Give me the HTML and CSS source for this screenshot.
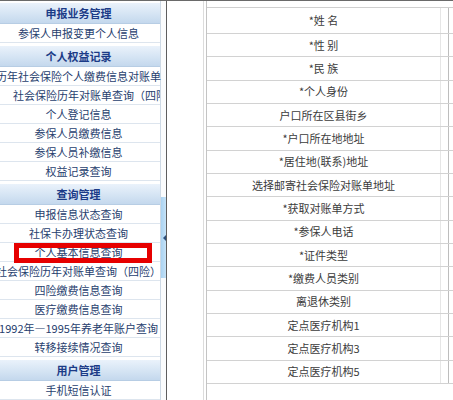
FILE: index.html
```html
<!DOCTYPE html>
<html lang="zh-CN">
<head>
<meta charset="utf-8">
<title>个人基本信息查询</title>
<link rel="stylesheet" href="styles.css">
</head>
<body>
<div class="page">
  <nav class="sidebar">
    <div class="head first">申报业务管理</div>
    <div class="item">参保人申报变更个人信息</div>
    <div class="head">个人权益记录</div>
    <div class="item">历年社会保险个人缴费信息对账单</div>
    <div class="item shifted">社会保险历年对账单查询（四险）</div>
    <div class="item">个人登记信息</div>
    <div class="item">参保人员缴费信息</div>
    <div class="item">参保人员补缴信息</div>
    <div class="item">权益记录查询</div>
    <div class="head">查询管理</div>
    <div class="item">申报信息状态查询</div>
    <div class="item">社保卡办理状态查询</div>
    <div class="item marked">个人基本信息查询<span class="mark"></span></div>
    <div class="item">社会保险历年对账单查询（四险）</div>
    <div class="item">四险缴费信息查询</div>
    <div class="item">医疗缴费信息查询</div>
    <div class="item">1992年—1995年养老年账户查询</div>
    <div class="item">转移接续情况查询</div>
    <div class="head">用户管理</div>
    <div class="item">手机短信认证</div>
  </nav>
  <div class="toggle"><div class="toggle-bar"><span class="arrow"></span></div></div>
  <main class="main">
    <div class="frame">
      <div class="col">
        <div class="table">
          <div class="row tall"><div class="label">*姓 名</div><div class="gap"></div><div class="value"></div></div>
          <div class="row"><div class="label">*性 别</div><div class="gap"></div><div class="value"></div></div>
          <div class="row"><div class="label">*民 族</div><div class="gap"></div><div class="value"></div></div>
          <div class="row"><div class="label">*个人身份</div><div class="gap"></div><div class="value"></div></div>
          <div class="row"><div class="label">户口所在区县街乡</div><div class="gap"></div><div class="value"></div></div>
          <div class="row"><div class="label">*户口所在地地址</div><div class="gap"></div><div class="value"></div></div>
          <div class="row"><div class="label">*居住地(联系)地址</div><div class="gap"></div><div class="value"></div></div>
          <div class="row"><div class="label">选择邮寄社会保险对账单地址</div><div class="gap"></div><div class="value"></div></div>
          <div class="row"><div class="label">*获取对账单方式</div><div class="gap"></div><div class="value"></div></div>
          <div class="row"><div class="label">*参保人电话</div><div class="gap"></div><div class="value"></div></div>
          <div class="row"><div class="label">*证件类型</div><div class="gap"></div><div class="value"></div></div>
          <div class="row"><div class="label">*缴费人员类别</div><div class="gap"></div><div class="value"></div></div>
          <div class="row"><div class="label">离退休类别</div><div class="gap"></div><div class="value"></div></div>
          <div class="row"><div class="label">定点医疗机构1</div><div class="gap"></div><div class="value"></div></div>
          <div class="row"><div class="label">定点医疗机构3</div><div class="gap"></div><div class="value"></div></div>
          <div class="row"><div class="label">定点医疗机构5</div><div class="gap"></div><div class="value"></div></div>
        </div>
      </div>
    </div>
  </main>
</div>
</body>
</html>
```

FILE: styles.css
```css
* {
  box-sizing: border-box;
}

html, body {
  margin: 0;
  padding: 0;
  background: #ffffff;
}

body {
  font-family: "Noto Sans CJK SC", "Noto Sans", sans-serif;
  font-size: 11px;
  width: 453px;
  height: 400px;
  overflow: hidden;
}

.page {
  display: flex;
  height: 400px;
  border-top: 1px solid #6a6a6a;
}

/* ---------- sidebar ---------- */
.sidebar {
  width: 161px;
  flex: none;
  display: flex;
  flex-direction: column;
  border-right: 1px solid #cdd9e5;
  background: #ffffff;
}

.head {
  flex: none;
  height: 21px;
  margin-top: 3px;
  display: flex;
  align-items: center;
  justify-content: center;
  padding-right: 3px;
  background: linear-gradient(#eaf2fb, #d3e3f3 60%, #c4d8ed);
  border-bottom: 1px solid #b7cde4;
  color: #1b3b87;
  font-weight: bold;
  line-height: 1;
  white-space: nowrap;
}

.head.first {
  margin-top: 2px;
}

.item {
  position: relative;
  flex: none;
  height: 19px;
  display: flex;
  align-items: center;
  justify-content: center;
  padding-right: 3px;
  border-bottom: 1px solid #dde5ee;
  color: #27406e;
  line-height: 1;
  white-space: nowrap;
}

.item.shifted {
  justify-content: flex-start;
  padding-left: 13px;
  overflow: hidden;
}

.item.marked {
  z-index: 2;
}

.mark {
  position: absolute;
  left: 14px;
  top: 0;
  width: 138px;
  height: 20px;
  border: 5px solid #e60000;
}

/* ---------- splitter toggle ---------- */
.toggle {
  width: 6px;
  flex: none;
  border-right: 1px solid #5e5e5e;
  background: #fbfcfd;
}

.toggle-bar {
  margin-top: 196px;
  height: 81px;
  background: linear-gradient(90deg, #a9d2f1, #c6e3f8);
  display: flex;
  align-items: center;
  justify-content: center;
}

.arrow {
  width: 0;
  height: 0;
  border-top: 3px solid transparent;
  border-bottom: 3px solid transparent;
  border-right: 3px solid #2c4f7c;
  margin-left: 1px;
}

/* ---------- main ---------- */
.main {
  flex: 1;
  padding-left: 36px;
  overflow: hidden;
}

.frame {
  height: 100%;
  border-left: 1px solid #dcdcdc;
  padding-left: 2px;
}

.col {
  height: 100%;
  border-left: 1px solid #c4c4c4;
  padding-top: 6px;
}

.table {
  border-top: 1px solid #cfcfcf;
}

.row {
  display: grid;
  grid-template-columns: 234px 7px 1fr;
  height: 23.333px;
  border-bottom: 1px solid #d2d2d2;
}

.row.tall {
  height: 26px;
}

.label {
  display: flex;
  align-items: center;
  justify-content: center;
  border-right: 1px solid #e6e6e6;
  color: #3b3b3b;
  line-height: 1;
  white-space: nowrap;
}

.value {
  border-left: 1px solid #bdbdbd;
}
```
